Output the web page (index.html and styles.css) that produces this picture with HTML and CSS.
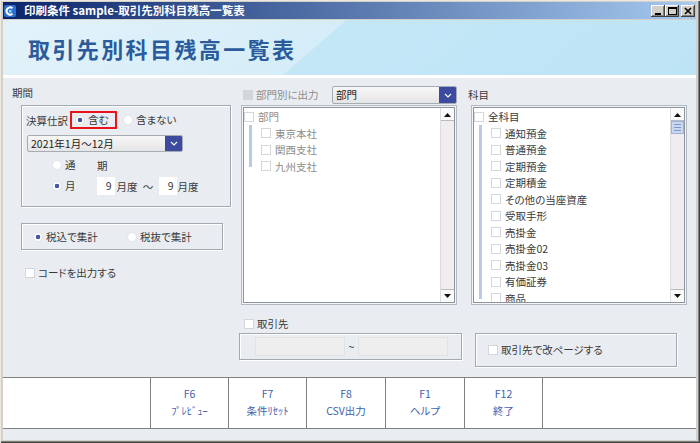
FILE: index.html
```html
<!DOCTYPE html>
<html lang="ja">
<head>
<meta charset="utf-8">
<title>印刷条件</title>
<link rel="stylesheet" href="styles.css">
</head>
<body>
<div class="window">
  <div class="titlebar">
    <svg class="ticon" width="12" height="12" viewBox="0 0 12 12"><rect x="0" y="0" width="12" height="12" rx="2" fill="#2d6fd0"/><path d="M8.5 3.2 A3.6 3.6 0 1 0 8.5 8.8" fill="none" stroke="#fff" stroke-width="2"/><rect x="5" y="5" width="2.5" height="2.5" fill="#7fe0ff"/></svg>
    <span class="title">印刷条件 sample-取引先別科目残高一覧表</span>
    <div class="ctrls">
      <span class="cbtn"><svg width="14" height="12" viewBox="0 0 14 12"><rect x="4" y="8" width="6" height="2" fill="#000"/></svg></span>
      <span class="cbtn"><svg width="14" height="12" viewBox="0 0 14 12"><rect x="3.5" y="2.5" width="8" height="7" fill="none" stroke="#000"/><rect x="3" y="2" width="9" height="2" fill="#000"/></svg></span>
      <span class="cbtn close"><svg width="14" height="12" viewBox="0 0 14 12"><path d="M4 3 L10 9 M10 3 L4 9" stroke="#000" stroke-width="1.6"/></svg></span>
    </div>
  </div>

  <div class="banner"><h1>取引先別科目残高一覧表</h1></div>

  <div class="body">
    <div class="left">
      <div class="lbl-period">期間</div>
      <div class="group1">
        <div class="row1">
          <span class="txt">決算仕訳</span>
          <span class="redbox"><span class="rb on"></span><span class="rtxt">含む</span></span>
          <span class="opt2"><span class="rb"></span><span class="rtxt">含まない</span></span>
        </div>
        <div class="combo wide">
          <span class="ctext">2021年1月～12月</span>
          <span class="cbtn-blue"><svg width="8" height="5" viewBox="0 0 8 5"><polyline points="1,1 4,4 7,1" fill="none" stroke="#fff" stroke-width="1.2"/></svg></span>
        </div>
        <div class="prow">
          <span class="rb"></span><span class="rtxt w32">通</span><span>期</span>
        </div>
        <div class="mrow">
          <span class="rb on"></span><span class="rtxt">月</span>
          <span class="num n1">9</span><span class="unit">月度</span><span class="tilde">～</span><span class="num">9</span><span class="unit u2">月度</span>
        </div>
      </div>
      <div class="group2">
        <span class="opt w94"><span class="rb on"></span><span class="rtxt">税込で集計</span></span>
        <span class="opt"><span class="rb"></span><span class="rtxt">税抜で集計</span></span>
      </div>
      <div class="coderow"><span class="cb"></span><span class="rtxt">コードを出力する</span></div>
    </div>

    <div class="main">
      <div class="lists">
        <div class="mid">
          <div class="head">
            <span class="cb dis"></span><span class="rtxt grey">部門別に出力</span>
            <div class="combo dept">
              <span class="ctext">部門</span>
              <span class="cbtn-blue"><svg width="8" height="5" viewBox="0 0 8 5"><polyline points="1,1 4,4 7,1" fill="none" stroke="#fff" stroke-width="1.2"/></svg></span>
            </div>
          </div>
          <div class="listbox">
            <div class="listin">
              <div class="items grey">
                <div class="item top"><span class="cb"></span>部門</div>
                <div class="sub">
                  <div class="item"><span class="cb"></span>東京本社</div>
                  <div class="item"><span class="cb"></span>関西支社</div>
                  <div class="item"><span class="cb"></span>九州支社</div>
                </div>
              </div>
              <div class="sbar">
                <span class="sbtn"><svg width="7" height="4" viewBox="0 0 7 4"><polygon points="0,4 7,4 3.5,0" fill="#111"/></svg></span>
                <span class="strack"></span>
                <span class="sbtn"><svg width="7" height="4" viewBox="0 0 7 4"><polygon points="0,0 7,0 3.5,4" fill="#111"/></svg></span>
              </div>
            </div>
          </div>
        </div>
        <div class="right">
          <div class="head"><span class="rtxt kamoku">科目</span></div>
          <div class="listbox">
            <div class="listin">
              <div class="items">
                <div class="item top"><span class="cb"></span>全科目</div>
                <div class="sub">
                  <div class="item"><span class="cb"></span>通知預金</div>
                  <div class="item"><span class="cb"></span>普通預金</div>
                  <div class="item"><span class="cb"></span>定期預金</div>
                  <div class="item"><span class="cb"></span>定期積金</div>
                  <div class="item"><span class="cb"></span>その他の当座資産</div>
                  <div class="item"><span class="cb"></span>受取手形</div>
                  <div class="item"><span class="cb"></span>売掛金</div>
                  <div class="item"><span class="cb"></span>売掛金02</div>
                  <div class="item"><span class="cb"></span>売掛金03</div>
                  <div class="item"><span class="cb"></span>有価証券</div>
                  <div class="item"><span class="cb"></span>商品</div>
                </div>
              </div>
              <div class="sbar">
                <span class="sbtn"><svg width="7" height="4" viewBox="0 0 7 4"><polygon points="0,4 7,4 3.5,0" fill="#111"/></svg></span>
                <span class="thumb"><i></i><i></i><i></i></span>
                <span class="strack"></span>
                <span class="sbtn"><svg width="7" height="4" viewBox="0 0 7 4"><polygon points="0,0 7,0 3.5,4" fill="#111"/></svg></span>
              </div>
            </div>
          </div>
        </div>
      </div>
      <div class="bottom">
        <div class="bl">
          <div class="torow"><span class="cb"></span><span class="rtxt">取引先</span></div>
          <div class="rangebox">
            <span class="field"></span><span class="sep">~</span><span class="field"></span>
          </div>
        </div>
        <div class="br"><span class="cb"></span><span class="rtxt">取引先で改ページする</span></div>
      </div>
    </div>
  </div>

  <div class="footer">
    <div class="fspace"></div>
    <div class="fbtn"><span>F6</span><span>ﾌﾟﾚﾋﾞｭｰ</span></div>
    <div class="fbtn"><span>F7</span><span>条件ﾘｾｯﾄ</span></div>
    <div class="fbtn"><span>F8</span><span>CSV出力</span></div>
    <div class="fbtn"><span>F1</span><span>ヘルプ</span></div>
    <div class="fbtn"><span>F12</span><span>終了</span></div>
    <div class="fbtn"></div>
  </div>
  <div class="strip"></div>
</div>
</body>
</html>
```
FILE: styles.css
```css
* { box-sizing: border-box; }
html, body { margin: 0; padding: 0; }
body {
  width: 700px; height: 443px; overflow: hidden;
  font-family: "Noto Sans CJK JP", "Noto Sans", sans-serif;
  font-size: 10.5px; color: #3a3a3a;
  font-feature-settings: "palt";
}
.window {
  width: 700px; height: 443px;
  background: #d4d0c8;
  padding: 2px 4px 3px 3px;
  display: flex; flex-direction: column;
  box-shadow: inset 1px 1px 0 #ece9e2, inset -1px -1px 0 #404040, inset -2px -2px 0 #808080;
}
.titlebar {
  height: 17px; flex: none;
  background: linear-gradient(to right, #0a246a, #a6caf0);
  display: flex; align-items: center;
  padding-left: 1px;
}
.ticon { flex: none; margin-right: 8px; }
.title { color: #fff; font-weight: bold; font-size: 11.5px; line-height: 17px; white-space: nowrap; font-feature-settings: normal; }
.ctrls { margin-left: auto; display: flex; margin-right: 1px; }
.cbtn {
  width: 14px; height: 12px; background: #d4d0c8; display: block;
  box-shadow: inset -1px -1px 0 #404040, inset 1px 1px 0 #fff, inset -2px -2px 0 #808080;
}
.cbtn svg { display: block; }
.cbtn.close { margin-left: 2px; }

.banner {
  height: 58px; flex: none; margin-top: 1px;
  border-bottom: 3px solid #fff;
  background: linear-gradient(139deg, #e3f2fa 0%, #d5edf8 45.3%, #c4e7f7 45.5%, #bde4f5 100%);
  display: flex; align-items: center;
  padding-left: 25px;
}
.banner h1 {
  margin: 0; font-size: 22px; font-weight: 700; line-height: 1;
  color: #2b5b9b; letter-spacing: 2.4px; font-feature-settings: normal;
}

.body { height: 299px; flex: none; background: #e9edf2; display: flex; }

/* left column */
.left { width: 234px; flex: none; padding-top: 8px; }
.lbl-period { margin-left: 9px; height: 14px; line-height: 14px; }
.group1 {
  margin: 5px 0 0 18px; width: 210px; height: 102px;
  border: 1px solid #a3a9b1;
  box-shadow: 1px 1px 0 #fff, inset 1px 1px 0 #fff;
  padding: 5px 0 0 4px;
}
.row1 { display: flex; align-items: center; height: 18px; }
.txt { line-height: 15px; }
.redbox {
  margin-left: 2px; width: 47px; height: 18px;
  border: 2px solid #e8141c;
  display: flex; align-items: center; padding-left: 3px;
}
.opt2 { display: flex; align-items: center; margin-left: 6px; }
.rb {
  width: 10px; height: 10px; border-radius: 50%; flex: none;
  background: #fff; border: 1px solid #e1e5ea;
}
.rb.on { background: radial-gradient(circle, #4656a8 0 2px, #fff 2.6px); }
.rtxt { margin-left: 3px; line-height: 14px; white-space: nowrap; }
.w32 { width: 32px; }

.combo {
  display: flex; align-items: stretch;
  height: 17px; border: 1px solid #a6acb4; border-radius: 2px;
  background: linear-gradient(#f7f7f7, #e5e5e5);
  overflow: hidden;
}
.combo.wide { margin: 6px 0 0 1px; width: 156px; }
.ctext { flex: 1; padding-left: 3px; line-height: 15px; color: #222; white-space: nowrap; }
.cbtn-blue { width: 17px; flex: none; background: #3c4b9f; display: flex; align-items: center; justify-content: center; }
.cbtn-blue svg { display: block; }

.prow { display: flex; align-items: center; height: 14px; margin: 6px 0 0 26px; }
.mrow { display: flex; align-items: center; height: 18px; margin: 5px 0 0 26px; }
.num {
  width: 18px; height: 18px; background: #fff; flex: none;
  text-align: right; padding-right: 3px; line-height: 18px;
}
.num.n1 { margin-left: 21px; }
.unit { margin-left: 2px; }
.unit.u2 { margin-left: 1px; }
.tilde { width: 21px; text-align: center; }

.group2 {
  margin: 16px 0 0 18px; width: 202px; height: 27px;
  border: 1px solid #a3a9b1;
  box-shadow: 1px 1px 0 #fff, inset 1px 1px 0 #fff;
  display: flex; align-items: center; padding-left: 11px;
}
.opt { display: flex; align-items: center; }
.w94 { width: 94px; }
.coderow { display: flex; align-items: center; height: 14px; margin: 16px 0 0 22px; }

.cb {
  width: 10px; height: 10px; flex: none;
  background: #fff; border: 1px solid #d3d7dc;
}
.cb.dis { background: #d2d6db; border-color: #d2d6db; }
.grey { color: #8c8c8c; }

/* main */
.main { width: 459px; flex: none; display: flex; flex-direction: column; }
.lists { display: flex; height: 227px; }
.mid { width: 228px; flex: none; padding-top: 8px; }
.right { width: 231px; flex: none; padding-top: 8px; }
.head { display: flex; align-items: center; height: 18px; }
.mid .head { padding-left: 6px; padding-right: 8px; }
.combo.dept { margin-left: auto; width: 125px; height: 18px; }
.kamoku { margin-left: 3px; }
.listbox {
  margin-top: 1px; width: 216px; height: 200px;
  border: 1px solid #b3b9c1; padding: 1px; background: #f3f5f8;
}
.mid .listbox { margin-left: 4px; }
.right .listbox { margin-left: 6px; }
.listin { border: 1px solid #8d939b; background: #fff; height: 100%; display: flex; overflow: hidden; }
.items { flex: 1; overflow: hidden; }
.item { display: flex; align-items: center; height: 16.5px; white-space: nowrap; }
.item.top { height: 17px; }
.item .cb { margin-right: 4px; }
.sub {
  padding-left: 17px;
  background: linear-gradient(#b8cbe5, #b8cbe5) no-repeat 5px 0 / 3px calc(100% - 8px);
}
.sbar { width: 14px; flex: none; background: #f0ecef; display: flex; flex-direction: column; border-left: 1px solid #dcdce0; }
.sbtn {
  height: 13px; flex: none; background: #fafafa;
  border-bottom: 1px solid #b8bcc2; border-top: 1px solid #fff;
  display: flex; align-items: center; justify-content: center;
}
.sbtn:last-child { border-bottom: none; border-top: 1px solid #b8bcc2; }
.sbtn svg { display: block; }
.strack { flex: 1; }
.thumb {
  height: 13px; flex: none; background: #c9d8ef; border: 1px solid #9db3d7;
  display: flex; flex-direction: column; justify-content: center; gap: 2px; padding: 0 2px;
}
.thumb i { display: block; height: 1px; background: #7e98c8; }

.bottom { display: flex; padding-top: 12px; }
.bl { margin-left: 2px; width: 223px; }
.torow { display: flex; align-items: center; height: 14px; padding-left: 5px; }
.rangebox {
  margin-top: 2px; height: 27px;
  border: 1px solid #a3a9b1;
  box-shadow: 1px 1px 0 #fff, inset 1px 1px 0 #fff;
  display: flex; align-items: center; padding-left: 15px;
}
.field { width: 90px; height: 19px; background: #eeeeee; border: 1px solid #e2e2e2; }
.sep { width: 13px; text-align: center; line-height: 14px; }
.br {
  margin: 16px 0 0 13px; width: 202px; height: 34px;
  border: 1px solid #a3a9b1;
  box-shadow: 1px 1px 0 #fff, inset 1px 1px 0 #fff;
  display: flex; align-items: center; padding-left: 12px;
}

/* footer */
.footer {
  height: 52px; flex: none; background: #fff;
  border-top: 1px solid #808080; border-bottom: 1px solid #808080;
  display: grid; grid-template-columns: 147px 78px 78px 79px 79px 78px 1fr;
}
.fbtn {
  border-left: 1px solid #808080;
  display: flex; flex-direction: column; align-items: center;
  padding-top: 8px; gap: 2px; color: #4361b0;
}
.fbtn span { line-height: 15px; white-space: nowrap; }
.strip { height: 11px; flex: none; background: #e9edf2; }
```
